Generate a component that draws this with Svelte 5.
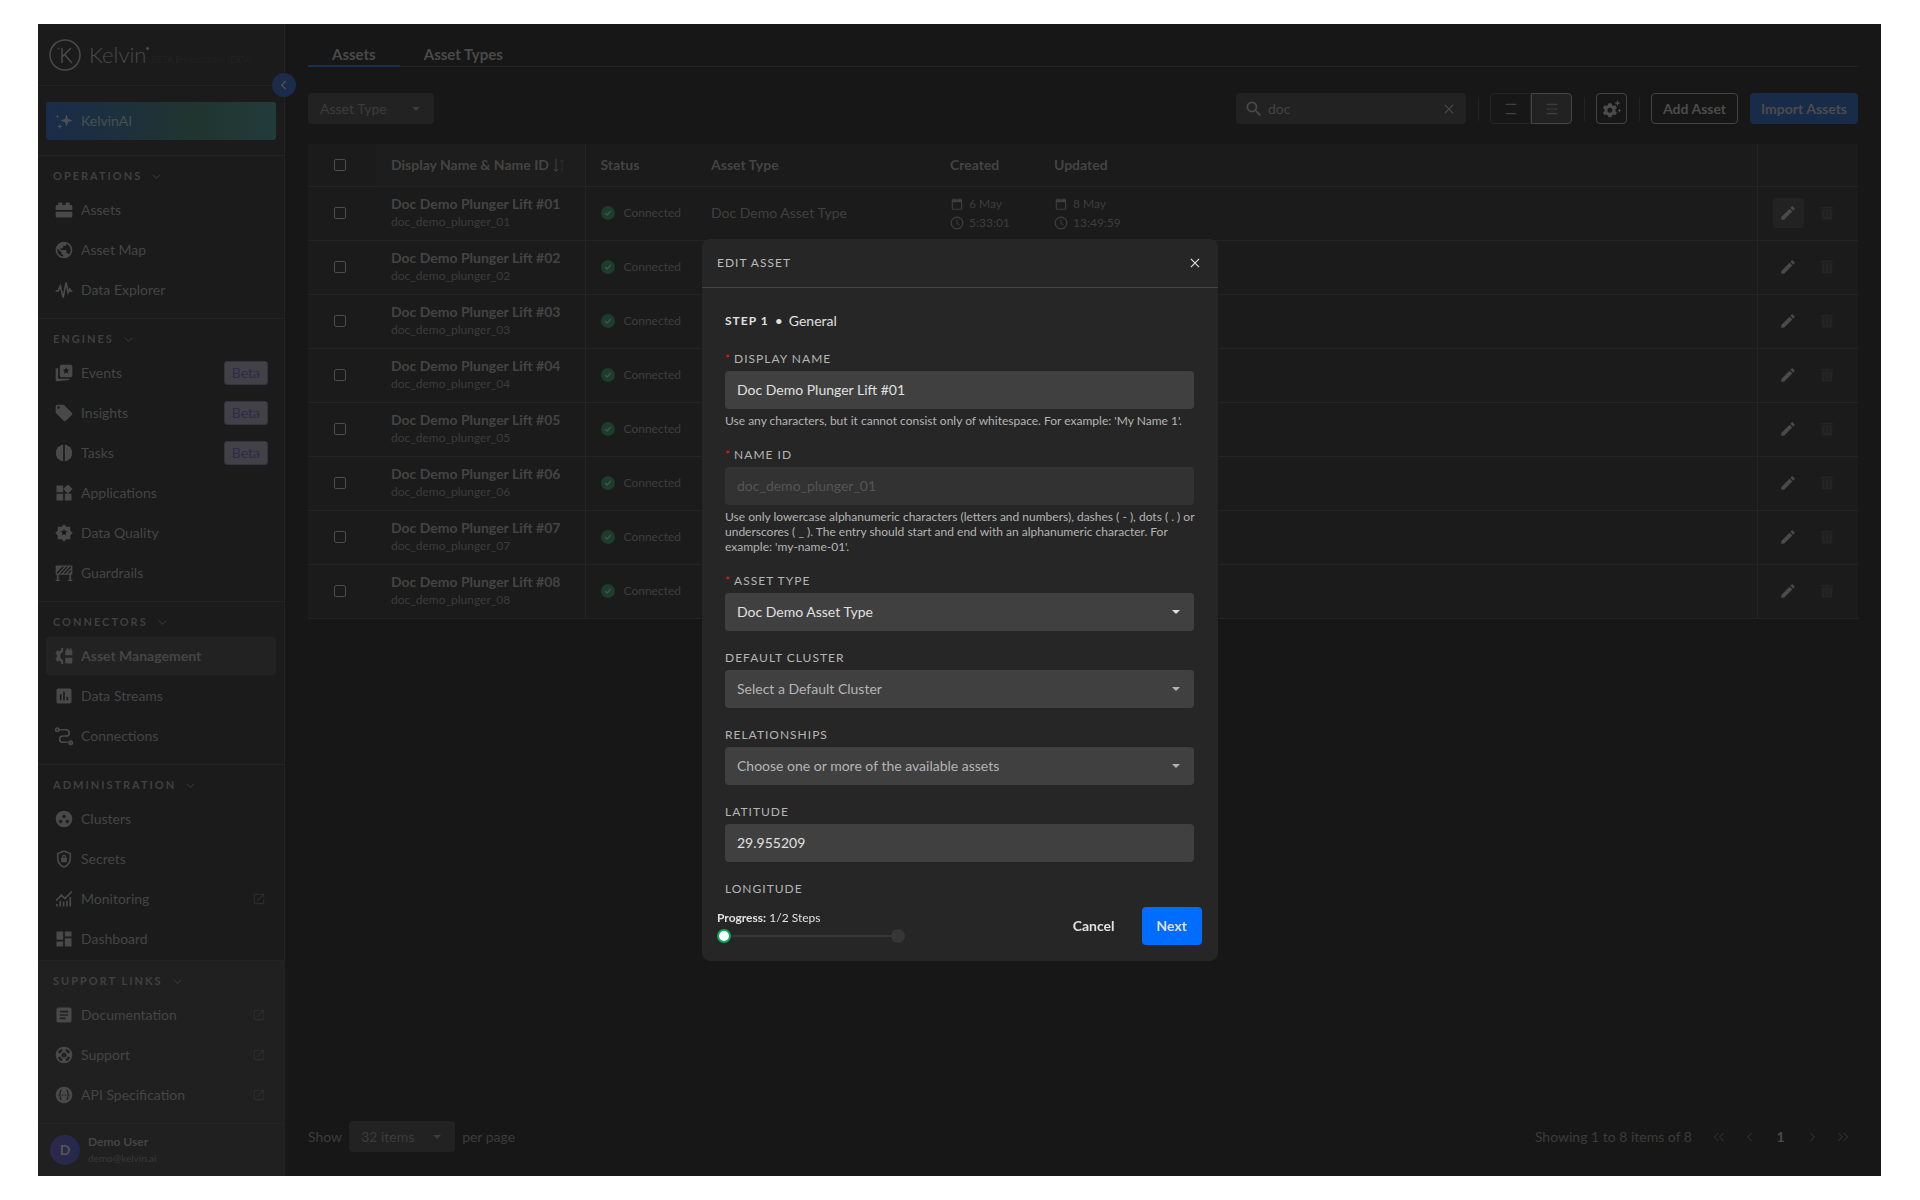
<script lang="ts">
	type NavItem = { label: string; icon: string; beta?: boolean; external?: boolean; active?: boolean };
	type NavSection = { title: string; items: NavItem[] };
	type Asset = { n: string; type?: string; created?: string[]; updated?: string[] };

	const sections: NavSection[] = [
		{
			title: 'Operations',
			items: [
				{ label: 'Assets', icon: 'assets' },
				{ label: 'Asset Map', icon: 'globe' },
				{ label: 'Data Explorer', icon: 'pulse' }
			]
		},
		{
			title: 'Engines',
			items: [
				{ label: 'Events', icon: 'events', beta: true },
				{ label: 'Insights', icon: 'tag', beta: true },
				{ label: 'Tasks', icon: 'tasks', beta: true },
				{ label: 'Applications', icon: 'widgets' },
				{ label: 'Data Quality', icon: 'quality' },
				{ label: 'Guardrails', icon: 'barrier' }
			]
		},
		{
			title: 'Connectors',
			items: [
				{ label: 'Asset Management', icon: 'management', active: true },
				{ label: 'Data Streams', icon: 'poll' },
				{ label: 'Connections', icon: 'route' }
			]
		},
		{
			title: 'Administration',
			items: [
				{ label: 'Clusters', icon: 'clusters' },
				{ label: 'Secrets', icon: 'shield' },
				{ label: 'Monitoring', icon: 'monitoring', external: true },
				{ label: 'Dashboard', icon: 'dashboard' }
			]
		}
	];

	const support: NavSection = {
		title: 'Support Links',
		items: [
			{ label: 'Documentation', icon: 'article', external: true },
			{ label: 'Support', icon: 'lifebuoy', external: true },
			{ label: 'API Specification', icon: 'api', external: true }
		]
	};

	const assets: Asset[] = [
		{ n: '01', type: 'Doc Demo Asset Type', created: ['6 May', '5:33:01'], updated: ['8 May', '13:49:59'] },
		{ n: '02' },
		{ n: '03' },
		{ n: '04' },
		{ n: '05' },
		{ n: '06' },
		{ n: '07' },
		{ n: '08' }
	];

	const star = 'l1.2 2.7 2.9.3-2.2 2 .7 2.9-2.6-1.5-2.6 1.5.7-2.9-2.2-2 2.9-.3z';

	// filled glyphs, 24x24, even-odd
	const glyphs: Record<string, string> = {
		assets:
			'M2 12V7.5C2 6.7 2.7 6 3.5 6H5V4.5C5 3.6 5.6 3 6.5 3h2c.9 0 1.5.6 1.5 1.5V6h4V4.5c0-.9.6-1.5 1.5-1.5h2c.9 0 1.5.6 1.5 1.5V6h1.500c.8 0 1.500.7 1.500 1.500V12zM2 14h20v5.500c0 .8-.7 1.500-1.500 1.500h-17c-.8 0-1.500-.7-1.500-1.500z',
		globe:
			'M12 2C6.48 2 2 6.48 2 12s4.48 10 10 10 10-4.48 10-10S17.52 2 12 2zm-1 17.93c-3.95-.49-7-3.85-7-7.93 0-.62.08-1.21.21-1.79L9 15v1c0 1.1.9 2 2 2v1.93zm6.9-2.54c-.26-.81-1-1.39-1.9-1.39h-1v-3c0-.55-.45-1-1-1H8v-2h2c.55 0 1-.45 1-1V7h2c1.1 0 2-.9 2-2v-.41c2.93 1.19 5 4.06 5 7.41 0 2.08-.8 3.97-2.1 5.39z',
		events:
			'M9 2h11c1.1 0 2 .9 2 2v11c0 1.1-.9 2-2 2H9c-1.1 0-2-.9-2-2V4c0-1.1.9-2 2-2zM14.5 5' +
			star +
			'M2 6.5L5 6v12c0 .6.4 1 1 1h12.5l-.5 1.5L4.500 22C3.200 22.100 2 21.300 2 20z',
		tag: 'M21.41 11.58l-9-9C12.05 2.22 11.55 2 11 2H4c-1.1 0-2 .9-2 2v7c0 .55.22 1.05.59 1.42l9 9c.36.36.86.58 1.41.58s1.05-.22 1.41-.59l7-7c.37-.36.59-.86.59-1.41s-.23-1.06-.59-1.42zM5.5 7C4.67 7 4 6.33 4 5.5S4.67 4 5.5 4 7 4.67 7 5.5 6.33 7 5.5 7z',
		tasks:
			'M11 2v20H9.500L4.500 19 2.500 15V9l2-4 5-3zM13 2h1.500l5 3 2 4v6l-2 4-5 3H13z',
		widgets: 'M13 13v8h8v-8h-8zM3 21h8v-8H3v8zM3 3v8h8V3H3zm13.66-1.31L11 7.34 16.66 13l5.66-5.66-5.66-5.65z',
		quality:
			'M12 1.500l3 3 4.500.0v4.500l3 3-3 3v4.500H15l-3 3-3-3H4.500V15l-3-3 3-3V4.500H9zM12 7' + star,
		barrier:
			'M2 3h20v11h-1.500v6H22v1.500h-5V20h1.500v-6h-13v6H7v1.500H2V20h1.500v-6H2zM3.500 12.500h1.300l7.500-8H9.800l-6.300 6.700zM7 12.500h2.300l7.500-8h-2.300zM11.500 12.500h2.300l6.700-7.200v-.8H19zM16 12.500h2.300l2.200-2.300V7.700z',
		management:
			'M13.500 11V6.500c0-.8.500-1.500 1.300-1.500V3.500c0-.5.400-.9.900-.9h1.200c.5 0 .9.400.9.900V5h1V3.500c0-.5.400-.9.900-.9h.4c.5 0 .9.400.9.900V5c.8 0 1 .7 1 1.500V11zM13.500 14H22v5.500c0 .8-.4 1.500-1.200 1.500h-6c-.8 0-1.300-.7-1.300-1.500zM11 2.500v4.700c-2.100.5-3.500 2.400-3.500 4.800s1.400 4.300 3.500 4.800v4.700H8.800l-.6-2.700-1.800-1-2.600.8L1.700 15l2-1.800v-2.400l-2-1.800 2.100-3.600 2.600.8 1.800-1 .6-2.700z',
		poll: 'M19 3H5c-1.1 0-2 .9-2 2v14c0 1.1.9 2 2 2h14c1.1 0 2-.9 2-2V5c0-1.1-.9-2-2-2zM9 17H7v-7h2v7zm4 0h-2V7h2v10zm4 0h-2v-4h2v4z',
		clusters:
			'M12 2a10 10 0 1 0 0 20 10 10 0 0 0 0-20zM8 17a2 2 0 1 1 0-4 2 2 0 0 1 0 4zM12 11a2 2 0 1 1 0-4 2 2 0 0 1 0 4zM16 17a2 2 0 1 1 0-4 2 2 0 0 1 0 4z',
		shield:
			'M12 1.5l8.5 3.2V11c0 5.3-3.5 10-8.5 11.5C7 21 3.5 16.3 3.5 11V4.7zM12 3.6L5.5 6v5c0 4.3 2.7 8.1 6.5 9.4 3.8-1.3 6.5-5.1 6.5-9.4V6zM9.500 10.500V9.300a2.500 2.500 0 0 1 5 0v1.200h1V16h-7v-5.500zM11 10.500h2V9.300a1 1 0 0 0-2 0z',
		dashboard: 'M3 13h8V3H3v10zm0 8h8v-6H3v6zm10 0h8V11h-8v10zm0-18v6h8V3h-8z',
		article:
			'M19 3H5c-1.1 0-2 .9-2 2v14c0 1.1.9 2 2 2h14c1.1 0 2-.9 2-2V5c0-1.1-.9-2-2-2zm-5 14H7v-2h7v2zm3-4H7v-2h10v2zm0-4H7V7h10v2z',
		lifebuoy:
			'M12 2a10 10 0 1 0 0 20 10 10 0 0 0 0-20zm7.46 7.12l-2.78 1.15a4.98 4.98 0 0 0-2.95-2.94l1.15-2.78c2.1.8 3.77 2.47 4.58 4.57zM12 15a3 3 0 1 1 0-6 3 3 0 0 1 0 6zM9.130 4.540l1.170 2.780a5 5 0 0 0-2.980 2.970L4.540 9.130a7.980 7.980 0 0 1 4.590-4.590zM4.540 14.870l2.780-1.150a4.970 4.970 0 0 0 2.970 2.960l-1.170 2.780a7.990 7.990 0 0 1-4.580-4.590zM14.880 19.460l-1.150-2.780a4.980 4.980 0 0 0 2.950-2.970l2.780 1.170a8.010 8.010 0 0 1-4.580 4.580z',
		open: 'M19 19H5V5h7V3H5c-1.11 0-2 .9-2 2v14c0 1.1.89 2 2 2h14c1.1 0 2-.9 2-2v-7h-2v7zM14 3v2h3.59l-9.83 9.83 1.41 1.41L19 6.41V10h2V3h-7z',
		edit: 'M3 17.25V21h3.75L17.81 9.94l-3.75-3.75L3 17.25zM20.71 7.04a1 1 0 0 0 0-1.41l-2.34-2.34a1 1 0 0 0-1.41 0l-1.83 1.83 3.75 3.75 1.83-1.83z',
		trash: 'M5 19c0 1.1.9 2 2 2h10c1.1 0 2-.9 2-2V7H5v12zM20 4h-4.5l-1-1h-5l-1 1H4v2h16V4zM9 9h1v9H9zM14 9h1v9h-1z',
		search:
			'M15.5 14h-.79l-.28-.27A6.47 6.47 0 0 0 16 9.5 6.5 6.5 0 1 0 9.5 16c1.61 0 3.09-.59 4.23-1.57l.27.28v.79l5 4.99L20.49 19l-4.99-5zm-6 0C7.01 14 5 11.99 5 9.5S7.01 5 9.5 5 14 7.01 14 9.5 11.99 14 9.5 14z',
		calendar:
			'M19 4h-1V2h-2v2H8V2H6v2H5c-1.1 0-2 .9-2 2v14c0 1.1.9 2 2 2h14c1.1 0 2-.9 2-2V6c0-1.1-.9-2-2-2zm0 16H5V9h14v11z',
		clock: 'M12 1a11 11 0 1 0 0 22 11 11 0 0 0 0-22zm0 20a9 9 0 1 1 0-18 9 9 0 0 1 0 18zM12.500 6H11v7l4.700 2.900.8-1.300-4-2.400z',
		sparkle:
			'M15 4l1.900 5.600 5.600 1.900-5.600 1.900L15 19l-1.900-5.600-5.600-1.900 5.600-1.900zM7 15l.9 2.600 2.600.9-2.600.9L7 22l-.9-2.600-2.600-.9 2.600-.9zM4 4l.6 1.900 1.900.6-1.900.6L4 9l-.6-1.900-1.900-.6 1.900-.6z',
		gear: 'M7.600 5h3.800l.6 2.300 1.600 1 2.300-.8 2 3.200-1.900 1.700v2.200l1.900 1.700-2 3.200-2.300-.8-1.600 1-.6 2.300H7.600L7 19.700l-1.600-1-2.300.8-2-3.200L3 14.600v-2.200l-1.900-1.700 2-3.200 2.300.8 1.600-1zM9.500 10.500a3 3 0 1 0 0 6 3 3 0 0 0 0-6zM18.500 1l1 2.900 2.900 1-2.900 1-1 2.900-1-2.900-2.900-1 2.900-1zM21 11.500l.7 1.800 1.800.7-1.800.7-.7 1.800-.7-1.800-1.800-.7 1.800-.7z'
	};

	// stroked glyphs
	const strokes: Record<string, string> = {
		pulse: 'M2 13h3l2.5-6L11 21l3.500-18L17 15l2-4 1 2h2',
		route:
			'M6.500 4.500h8a3.700 3.700 0 0 1 0 7.500h-4a3.700 3.700 0 0 0 0 7.500h6M4 2.500a2 2 0 1 0 0 4 2 2 0 0 0 0-4zM20 18a2 2 0 1 0 0 4 2 2 0 0 0 0-4zM19.500 20h1',
		monitoring: 'M2.500 14L9 7.500l4 4L21.500 3M3.500 21v-3M7.500 21v-7M11.500 21v-6M15.500 21v-7M19.500 21V9.500',
		chevronDown: 'M4 8l8 8 8-8',
		chevronLeft: 'M15 5l-7 7 7 7',
		chevronRight: 'M9 5l7 7-7 7',
		first: 'M11 5l-7 7 7 7M20 5l-7 7 7 7',
		last: 'M4 5l7 7-7 7M13 5l7 7-7 7',
		close: 'M5 5l14 14M19 5L5 19',
		rows2: 'M3 4h18M3 20h18',
		rows3: 'M3 4h18M3 12h18M3 20h18'
	};

	let displayName = $state('Doc Demo Plunger Lift #01');
	let latitude = $state('29.955209');
	let search = $state('doc');
</script>

{#snippet icon(name: string, size = 20)}
	<svg width={size} height={size} viewBox="0 0 24 24" aria-hidden="true">
		{#if name === 'api'}
			<circle cx="12" cy="12" r="10" fill="currentColor" />
			<path
				d="M9 6.5C7 6.5 7.5 9 7.5 10S7 12 5.5 12c1.5 0 2 1 2 2s-.5 3.5 1.5 3.5M15 6.5c2 0 1.5 2.5 1.5 3.5s.5 2 2 2c-1.5 0-2 1-2 2s.5 3.5-1.5 3.5M9.500 12h1M11.500 12h1M13.500 12h1"
				fill="none"
				stroke="#202020"
				stroke-width="1.5"
			/>
		{:else if strokes[name]}
			<path d={strokes[name]} fill="none" stroke="currentColor" stroke-width="2" />
		{:else}
			<path d={glyphs[name]} fill="currentColor" fill-rule="evenodd" />
		{/if}
	</svg>
{/snippet}

{#snippet navSection(section: NavSection)}
	<section class="nav-section">
		<button class="nav-title">{section.title} {@render icon('chevronDown', 11)}</button>
		<ul>
			{#each section.items as item}
				<li>
					<a href="#{item.icon}" class:active={item.active}>
						{@render icon(item.icon)}
						<span>{item.label}</span>
						{#if item.beta}<em class="beta">Beta</em>{/if}
						{#if item.external}<i class="external">{@render icon('open', 14)}</i>{/if}
					</a>
				</li>
			{/each}
		</ul>
	</section>
{/snippet}

{#snippet stamp(value?: string[])}
	{#if value}
		<div class="stamp">{@render icon('calendar', 14)} {value[0]}</div>
		<div class="stamp">{@render icon('clock', 14)} {value[1]}</div>
	{/if}
{/snippet}

<div class="page">
	<div class="app">
		<aside class="sidebar">
			<div class="brand">
				<svg width="32" height="32" viewBox="0 0 32 32" fill="none" stroke="currentColor" aria-hidden="true">
					<circle cx="16" cy="16" r="15" stroke-width="1.5" />
					<path d="M13 9v15M22 9l-9 9M15.5 15.5L23 24" stroke-width="1.5" />
					<circle cx="9.5" cy="9.5" r=".5" />
				</svg>
				<span class="brand-name">Kelvin</span>
				<svg class="mark" width="3" height="3" viewBox="0 0 3 3" aria-hidden="true">
					<circle cx="1.5" cy="1.5" r="1.5" fill="currentColor" />
				</svg>
				<small>BETA Environment (DEV)</small>
			</div>
			<button class="collapse" aria-label="Collapse sidebar">{@render icon('chevronLeft', 14)}</button>
			<div class="ai">
				<a href="#ai">{@render icon('sparkle')} <span>KelvinAI</span></a>
			</div>
			<nav>
				{#each sections as section}
					{@render navSection(section)}
				{/each}
			</nav>
			<div class="bottom">
				{@render navSection(support)}
				<div class="user">
					<span class="avatar">D</span>
					<div>
						<strong>Demo User</strong>
						<small>demo@kelvin.ai</small>
					</div>
				</div>
			</div>
		</aside>

		<main>
			<div class="tabs">
				<a href="#assets" class="current">Assets</a>
				<a href="#asset-types">Asset Types</a>
			</div>

			<div class="toolbar">
				<div class="select small filter">
					<select aria-label="Asset Type"><option>Asset Type</option></select>
				</div>
				<label class="search">
					{@render icon('search')}
					<input type="text" aria-label="Search" bind:value={search} />
					<button aria-label="Clear search">{@render icon('close', 14)}</button>
				</label>
				<span class="divider"></span>
				<div class="density">
					<button aria-label="Comfortable rows">{@render icon('rows2', 14)}</button>
					<button class="on" aria-label="Compact rows">{@render icon('rows3', 14)}</button>
				</div>
				<span class="divider"></span>
				<button class="outline square" aria-label="Table settings">{@render icon('gear')}</button>
				<span class="divider"></span>
				<button class="outline">Add Asset</button>
				<button class="import">Import Assets</button>
			</div>

			<table>
				<colgroup>
					<col class="c-check" />
					<col class="c-name" />
					<col class="c-status" />
					<col class="c-type" />
					<col class="c-date" />
					<col />
					<col class="c-actions" />
				</colgroup>
				<thead>
					<tr>
						<th class="check"><input type="checkbox" aria-label="Select all" /></th>
						<th class="name sorted">
							Display Name &amp; Name ID
							<svg class="sort" width="12" height="13" viewBox="0 0 12 13" fill="none" stroke="currentColor" aria-hidden="true">
								<path d="M3 0v12M1 10l2 2.500L5 10" />
								<path d="M9 13V1M7 3l2-2.500L11 3" opacity=".4" />
							</svg>
						</th>
						<th>Status</th>
						<th>Asset Type</th>
						<th>Created</th>
						<th>Updated</th>
						<th class="actions"></th>
					</tr>
				</thead>
				<tbody>
					{#each assets as asset, i}
						<tr>
							<td class="check"><input type="checkbox" aria-label="Select asset {asset.n}" /></td>
							<td class="name">
								<strong>Doc Demo Plunger Lift #{asset.n}</strong>
								<small>doc_demo_plunger_{asset.n}</small>
							</td>
							<td>
								<div class="status">
									<svg width="14" height="14" viewBox="0 0 14 14" aria-hidden="true">
										<circle cx="7" cy="7" r="7" fill="#1a3d2c" />
										<path d="M4 7l2 2 4-4" fill="none" stroke="#4c4c4c" stroke-width="1.5" />
									</svg>
									Connected
								</div>
							</td>
							<td>{asset.type ?? ''}</td>
							<td>{@render stamp(asset.created)}</td>
							<td>{@render stamp(asset.updated)}</td>
							<td class="actions">
								<div>
									<button class:hover={i === 0} aria-label="Edit asset {asset.n}">{@render icon('edit', 18)}</button>
									<button disabled aria-label="Delete asset {asset.n}">{@render icon('trash', 18)}</button>
								</div>
							</td>
						</tr>
					{/each}
				</tbody>
			</table>

			<footer>
				<label for="page-size">Show</label>
				<div class="select small size">
					<select id="page-size"><option>32 items</option></select>
				</div>
				<span>per page</span>
				<span class="summary">Showing 1 to 8 items of 8</span>
				<div class="pager">
					<button disabled aria-label="First page">{@render icon('first', 14)}</button>
					<button disabled aria-label="Previous page">{@render icon('chevronLeft', 14)}</button>
					<button class="page-number">1</button>
					<button disabled aria-label="Next page">{@render icon('chevronRight', 14)}</button>
					<button disabled aria-label="Last page">{@render icon('last', 14)}</button>
				</div>
			</footer>
		</main>
	</div>
</div>

<dialog open aria-labelledby="dialog-title">
	<header>
		<h2 id="dialog-title">Edit Asset</h2>
		<button aria-label="Close">{@render icon('close', 14)}</button>
	</header>
	<form id="asset-form">
		<h3><b>Step 1</b><span>•</span>General</h3>
		<div class="field">
			<label for="display-name"><span class="required">*</span>Display Name</label>
			<input id="display-name" type="text" bind:value={displayName} />
			<p>Use any characters, but it cannot consist only of whitespace. For example: 'My Name 1'.</p>
		</div>
		<div class="field">
			<label for="name-id"><span class="required">*</span>Name ID</label>
			<input id="name-id" type="text" value="doc_demo_plunger_01" disabled />
			<p>
				Use only lowercase alphanumeric characters (letters and numbers), dashes ( - ), dots ( . ) or
				underscores ( _ ). The entry should start and end with an alphanumeric character. For example:
				'my-name-01'.
			</p>
		</div>
		<div class="field">
			<label for="asset-type"><span class="required">*</span>Asset Type</label>
			<div class="select">
				<select id="asset-type"><option>Doc Demo Asset Type</option></select>
			</div>
		</div>
		<div class="field">
			<label for="cluster">Default Cluster</label>
			<div class="select empty">
				<select id="cluster"><option>Select a Default Cluster</option></select>
			</div>
		</div>
		<div class="field">
			<label for="relationships">Relationships</label>
			<div class="select empty">
				<select id="relationships"><option>Choose one or more of the available assets</option></select>
			</div>
		</div>
		<div class="field">
			<label for="latitude">Latitude</label>
			<input id="latitude" type="text" bind:value={latitude} />
		</div>
		<div class="field">
			<label for="longitude">Longitude</label>
			<input id="longitude" type="text" />
		</div>
	</form>
	<div class="dialog-footer">
		<div class="progress">
			<div><b>Progress:</b> 1/2 Steps</div>
			<div class="track"><i class="dot done"></i><i class="line"></i><i class="dot"></i></div>
		</div>
		<button class="cancel">Cancel</button>
		<button class="next">Next</button>
	</div>
</dialog>

<style>
	:global(body) {
		background: #fff;
	}
	* {
		box-sizing: border-box;
	}
	.page,
	dialog {
		font-family: Lato, 'Open Sans', sans-serif;
		font-size: 14px;
		line-height: 18px;
	}
	button,
	input,
	select {
		font: inherit;
		color: inherit;
		background: none;
		border: 0;
		padding: 0;
		margin: 0;
	}
	svg {
		display: block;
		flex: none;
	}
	a {
		color: inherit;
		text-decoration: none;
	}

	.page {
		height: 100vh;
		padding: 24px 39px 24px 38px;
		color: #404040;
	}
	.app {
		display: flex;
		height: 100%;
		background: #171717;
	}

	.sidebar {
		position: relative;
		display: flex;
		flex-direction: column;
		width: 247px;
		flex: none;
		background: #1b1b1b;
		border-right: 1px solid #222;
		color: #454545;
	}
	.brand {
		display: flex;
		align-items: center;
		height: 62px;
		padding-left: 11px;
		border-bottom: 1px solid #222;
		color: #4a4a4a;
	}
	.brand-name {
		margin-left: 8px;
		font-size: 22px;
		font-weight: 300;
	}
	.mark {
		margin-bottom: 12px;
	}
	.brand small {
		margin: 10px 0 0 2px;
		font-size: 9px;
		color: #222;
	}
	.collapse {
		position: absolute;
		top: 49px;
		right: -12px;
		display: flex;
		align-items: center;
		justify-content: center;
		width: 24px;
		height: 24px;
		border-radius: 50%;
		background: #1a2c4a;
		color: #555;
	}
	.ai {
		padding: 16px 8px 15px;
	}
	.ai a {
		display: flex;
		align-items: center;
		gap: 7px;
		height: 38px;
		padding: 0 8px;
		border-radius: 3px;
		background: linear-gradient(90deg, #192c4a, #20352f 65%, #223b3b);
		color: #4a5052;
	}
	nav {
		flex: 1;
		min-height: 0;
		overflow: hidden;
	}
	.nav-section {
		padding: 0 8px 9px;
		border-top: 1px solid #232323;
	}
	.nav-title {
		display: flex;
		align-items: center;
		gap: 9px;
		height: 35px;
		padding: 5px 7px 0;
		font-size: 11px;
		font-weight: 700;
		letter-spacing: 2px;
		text-transform: uppercase;
		color: #404040;
	}
	ul {
		display: flex;
		flex-direction: column;
		gap: 2px;
		margin: 0;
		padding: 0;
		list-style: none;
	}
	li a {
		display: flex;
		align-items: center;
		gap: 7px;
		height: 38px;
		padding: 0 8px;
		border-radius: 3px;
	}
	li a.active {
		background: #222;
		font-weight: 700;
	}
	li a svg {
		color: #494949;
	}
	.beta {
		margin-left: auto;
		padding: 2px 7px;
		border: 1px solid #35333d;
		border-radius: 3px;
		background: #424147;
		color: #302a48;
		font-style: normal;
	}
	.external {
		margin: 0 2px 0 auto;
	}
	.external svg {
		color: #2b2b2b;
	}
	.bottom {
		background: #202020;
	}
	.user {
		display: flex;
		align-items: center;
		gap: 8px;
		height: 53px;
		padding-left: 12px;
		border-top: 1px solid #242424;
	}
	.avatar {
		display: flex;
		align-items: center;
		justify-content: center;
		width: 30px;
		height: 30px;
		border-radius: 50%;
		background: linear-gradient(90deg, #2d274b, #242a4d);
		color: #555;
		font-weight: 700;
	}
	.user strong,
	.user small {
		display: block;
		font-size: 12px;
		line-height: 16px;
	}
	.user small {
		font-size: 10px;
		color: #3a3a3a;
	}

	main {
		display: flex;
		flex-direction: column;
		flex: 1;
		min-width: 0;
		padding: 14px 23px 24px;
	}
	.tabs {
		display: flex;
		border-bottom: 1px solid #232323;
		font-size: 15px;
		font-weight: 700;
		color: #4a4a4a;
	}
	.tabs a {
		padding: 7px 24px 2px;
		margin-bottom: -1px;
		border-bottom: 2px solid transparent;
	}
	.tabs .current {
		border-color: #1a3050;
	}
	.toolbar {
		display: flex;
		align-items: center;
		gap: 12px;
		margin: 26px 0 20px;
	}
	.select {
		position: relative;
	}
	.select::after {
		content: '';
		position: absolute;
		top: 50%;
		right: 14px;
		margin-top: -2px;
		border: 4px solid transparent;
		border-top-color: currentColor;
		border-bottom: 0;
		pointer-events: none;
	}
	.select select {
		width: 100%;
		height: 38px;
		padding: 0 12px;
		border-radius: 4px;
		background: #404040;
		appearance: none;
	}
	.select.small select {
		height: 31px;
		background: #222;
	}
	.filter {
		width: 126px;
		color: #3c3c3c;
	}
	.search {
		display: flex;
		align-items: center;
		gap: 4px;
		width: 230px;
		height: 31px;
		margin-left: auto;
		padding: 0 10px 0 8px;
		border-radius: 4px;
		background: #222;
		color: #4a4a4a;
	}
	.search input {
		flex: 1;
		min-width: 0;
		color: #444;
	}
	.divider {
		width: 1px;
		height: 24px;
		margin: 0 -1px 0 0;
		background: #232323;
	}
	.density {
		display: flex;
	}
	.density button {
		display: flex;
		align-items: center;
		justify-content: center;
		width: 41px;
		height: 31px;
		border: 1px solid #242424;
		border-radius: 4px 0 0 4px;
	}
	.density .on {
		border-color: #444;
		border-radius: 0 4px 4px 0;
		background: #222;
	}
	.outline,
	.import {
		height: 31px;
		padding: 0 11px;
		border-radius: 4px;
		font-weight: 700;
		color: #4c4c4c;
	}
	.outline {
		border: 1px solid #444;
	}
	.square {
		display: flex;
		align-items: center;
		justify-content: center;
		width: 31px;
		padding: 0;
	}
	.import {
		background: #182b49;
	}

	table {
		width: 100%;
		border-collapse: collapse;
		table-layout: fixed;
		background: #1b1b1b;
	}
	.c-check {
		width: 68px;
	}
	.c-name {
		width: 209px;
	}
	.c-status {
		width: 111px;
	}
	.c-type {
		width: 239px;
	}
	.c-date {
		width: 104px;
	}
	.c-actions {
		width: 101px;
	}
	th,
	td {
		height: 54px;
		padding: 0 0 0 15px;
		border-bottom: 1px solid #232323;
		text-align: left;
		white-space: nowrap;
	}
	th {
		height: 42px;
		color: #444;
	}
	th.sorted {
		background: #1d1d1d;
	}
	.check {
		padding: 0 5px 0 0;
	}
	.check input {
		display: block;
		width: 12px;
		height: 12px;
		margin: 0 auto;
		border: 1px solid #4c4c4c;
		border-radius: 2px;
		appearance: none;
	}
	.name {
		border-right: 1px solid #232323;
	}
	.name strong,
	.name small {
		display: block;
		color: #444;
	}
	.name small {
		font-size: 12px;
		color: #3c3c3c;
	}
	.sort {
		display: inline-block;
		margin-left: 1px;
		vertical-align: -2px;
	}
	.status,
	.stamp {
		display: flex;
		align-items: center;
		gap: 9px;
		font-size: 12px;
		color: #3e3e3e;
	}
	.stamp {
		gap: 5px;
		height: 19px;
	}
	.actions {
		border-left: 1px solid #232323;
	}
	.actions div {
		display: flex;
		gap: 8px;
	}
	.actions button {
		display: flex;
		align-items: center;
		justify-content: center;
		width: 31px;
		height: 30px;
		border-radius: 3px;
		color: #4a4a4a;
	}
	.actions .hover {
		background: #222;
	}
	.actions button:disabled {
		color: #242424;
	}

	footer {
		display: flex;
		align-items: center;
		gap: 7px;
		margin-top: auto;
		color: #3c3c3c;
	}
	.size {
		width: 106px;
	}
	.summary {
		margin-left: auto;
	}
	.pager {
		display: flex;
		margin-left: 4px;
	}
	.pager button {
		display: flex;
		align-items: center;
		justify-content: center;
		width: 31px;
	}
	.pager button:disabled {
		color: #2c2c2c;
	}
	.pager .page-number {
		font-weight: 700;
		color: #4a4a4a;
	}

	dialog {
		position: fixed;
		inset: 0;
		display: flex;
		flex-direction: column;
		width: 516px;
		height: 722px;
		max-height: 100vh;
		margin: auto;
		padding: 0;
		border: 0;
		border-radius: 8px;
		background: #262626;
		color: #e0e0e0;
	}
	header {
		display: flex;
		align-items: center;
		justify-content: space-between;
		height: 49px;
		flex: none;
		padding: 0 16px 0 15px;
		border-bottom: 1px solid #444;
	}
	h2 {
		margin: 0;
		font-size: 12px;
		font-weight: 400;
		letter-spacing: 1px;
		text-transform: uppercase;
		color: #bbb;
	}
	form {
		display: flex;
		flex-direction: column;
		gap: 19px;
		flex: 1;
		min-height: 0;
		overflow: hidden;
		padding: 24px 24px 0 23px;
	}
	h3 {
		display: flex;
		gap: 6px;
		margin: 0 0 2px;
		font-size: 14px;
		font-weight: 400;
	}
	h3 b {
		font-size: 12px;
		letter-spacing: 1px;
		text-transform: uppercase;
	}
	.field {
		flex: none;
	}
	.field label {
		display: block;
		margin-bottom: 4px;
		font-size: 12px;
		line-height: 16px;
		letter-spacing: 1px;
		text-transform: uppercase;
		color: #b5b5b5;
	}
	.required {
		margin-right: 3px;
		color: #d8261c;
	}
	.field input {
		display: block;
		width: 100%;
		height: 38px;
		padding: 0 12px 2px;
		border-radius: 4px;
		background: #404040;
	}
	.field input:disabled {
		background: #323232;
		color: #555;
	}
	.field p {
		margin: 4px -16px 0 0;
		font-size: 12px;
		line-height: 15px;
		color: #b5b5b5;
	}
	.empty {
		color: #b5b5b5;
	}
	.dialog-footer {
		display: flex;
		align-items: center;
		flex: none;
		height: 61px;
		padding: 0 16px 9px 15px;
	}
	.progress {
		width: 188px;
		margin-right: auto;
		font-size: 12px;
	}
	.track {
		display: flex;
		align-items: center;
		margin-top: 2px;
	}
	.dot {
		width: 14px;
		height: 14px;
		border-radius: 50%;
		background: #363636;
	}
	.done {
		border: 2px solid #0aa858;
		background: #fff;
	}
	.line {
		flex: 1;
		height: 2px;
		background: #363636;
	}
	.cancel,
	.next {
		height: 38px;
		padding: 0 15px;
		border-radius: 4px;
		font-weight: 700;
	}
	.next {
		margin-left: 12px;
		background: #006dff;
	}
</style>
